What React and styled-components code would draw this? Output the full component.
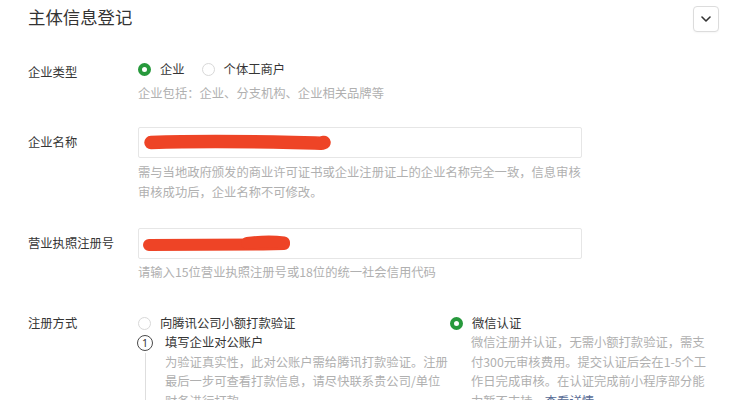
import React from "react";
import styled, { createGlobalStyle } from "styled-components";

const GlobalStyle = createGlobalStyle`
  html, body {
    margin: 0;
    padding: 0;
    background: #fff;
  }
  body {
    font-family: "Noto Sans CJK SC", "Noto Sans", sans-serif;
    color: #353535;
  }
`;

const Page = styled.div`
  width: 729px;
  height: 400px;
  overflow: hidden;
  box-sizing: border-box;
  padding: 0 10px 0 28px;
`;

const Header = styled.div`
  display: flex;
  justify-content: space-between;
  align-items: flex-start;
  padding-top: 5px;
`;

const Title = styled.h1`
  margin: 0;
  font-size: 17.4px;
  line-height: 24px;
  font-weight: 400;
  color: #333;
`;

const ToggleButton = styled.button`
  margin-top: 1px;
  width: 26px;
  height: 26px;
  padding: 0;
  display: flex;
  align-items: center;
  justify-content: center;
  background: #fff;
  border: 1px solid #dcdcdc;
  border-radius: 4px;
  box-shadow: 0 1px 2px rgba(0, 0, 0, 0.04);
`;

const Row = styled.div`
  display: grid;
  grid-template-columns: 110px 1fr;
  margin-top: ${(p) => p.$gap}px;
  font-size: 12.3px;
`;

const Label = styled.div`
  color: #353535;
  line-height: ${(p) => p.$lh || 20}px;
  padding-top: ${(p) => p.$pt || 0}px;
`;

const Field = styled.div`
  display: flex;
  flex-direction: column;
`;

const RadioGroup = styled.div`
  display: flex;
  align-items: center;
  gap: 17px;
  line-height: ${(p) => p.$lh || 20}px;
`;

const Option = styled.label`
  display: flex;
  align-items: center;
  gap: 9px;
  color: #353535;
`;

const Radio = styled.span`
  box-sizing: border-box;
  width: 13px;
  height: 13px;
  border-radius: 50%;
  flex: none;
  background: #fff;
  border: ${(p) => (p.$checked ? "4px solid #27993c" : "1px solid #d8d8d8")};
`;

const Hint = styled.div`
  color: #b0b0b0;
  line-height: 20px;
  margin-top: ${(p) => p.$mt || 0}px;
  width: ${(p) => p.$w || 444}px;
`;

const InputBox = styled.div`
  box-sizing: border-box;
  width: 444px;
  height: 31px;
  border: 1px solid #e6e6e6;
  border-radius: 2px;
  padding-left: 4px;
  display: flex;
  align-items: center;
`;

const Methods = styled.div`
  display: flex;
  line-height: 19.5px;
`;

const MethodColumn = styled.div`
  width: ${(p) => p.$w}px;
  flex: none;
  display: flex;
  flex-direction: column;
`;

const Step = styled.div`
  display: grid;
  grid-template-columns: 27px 1fr;
`;

const StepRail = styled.div`
  display: flex;
  flex-direction: column;
  align-items: center;
  width: 16px;
  margin-left: -1px;
`;

const StepNumber = styled.span`
  box-sizing: border-box;
  width: 16px;
  height: 16px;
  margin-top: 1.5px;
  border: 1px solid #4a4a4a;
  border-radius: 50%;
  font-size: 10.5px;
  line-height: 14px;
  text-align: center;
  color: #333;
  font-family: "Noto Sans", sans-serif;
`;

const StepLine = styled.span`
  flex: 1;
  width: 1px;
  margin-top: 2px;
  background: #dedede;
`;

const StepTitle = styled.div`
  color: #353535;
`;

const Desc = styled.div`
  color: #b0b0b0;
  width: ${(p) => p.$w}px;
  margin-left: ${(p) => p.$ml || 0}px;
`;

const Link = styled.a`
  color: #576b95;
  text-decoration: none;
`;

const Chevron = () => (
  <svg width="10" height="6" viewBox="0 0 10 6">
    <path d="M1 1 L5 5 L9 1" fill="none" stroke="#333" strokeWidth="1.6" strokeLinecap="round" strokeLinejoin="round" />
  </svg>
);

const Scribble = ({ width, children }) => (
  <svg width={width} height="22" viewBox={`0 0 ${width} 22`}>
    <g fill="none" stroke="#ee4426" strokeLinecap="round" strokeLinejoin="round">
      {children}
    </g>
  </svg>
);

export default function App() {
  return (
    <>
      <GlobalStyle />
      <Page>
        <Header>
          <Title>主体信息登记</Title>
          <ToggleButton aria-label="收起">
            <Chevron />
          </ToggleButton>
        </Header>

        <Row $gap={27}>
          <Label $pt={3}>企业类型</Label>
          <Field>
            <RadioGroup>
              <Option>
                <Radio $checked />
                企业
              </Option>
              <Option>
                <Radio />
                个体工商户
              </Option>
            </RadioGroup>
            <Hint $mt={4}>企业包括：企业、分支机构、企业相关品牌等</Hint>
          </Field>
        </Row>

        <Row $gap={24}>
          <Label $lh={31}>企业名称</Label>
          <Field>
            <InputBox>
              <Scribble width={190}>
                <path d="M8 10.5 C 50 9, 110 9.5, 150 10.5 S 175 11.5, 181 10.5" strokeWidth="13.5" />
              </Scribble>
            </InputBox>
            <Hint $mt={3.5}>
              需与当地政府颁发的商业许可证书或企业注册证上的企业名称完全一致，信息审核审核成功后，企业名称不可修改。
            </Hint>
          </Field>
        </Row>

        <Row $gap={26.5}>
          <Label $lh={31}>营业执照注册号</Label>
          <Field>
            <InputBox>
              <Scribble width={152}>
                <path d="M6 12 C 40 11.5, 80 11.5, 120 11.5 L 141 11" strokeWidth="12" />
                <path d="M104 10 Q 125 7.5, 141 9.5" strokeWidth="12" />
              </Scribble>
            </InputBox>
            <Hint $mt={3}>请输入15位营业执照注册号或18位的统一社会信用代码</Hint>
          </Field>
        </Row>

        <Row $gap={31.5}>
          <Label $lh={19.5}>注册方式</Label>
          <Methods>
            <MethodColumn $w={312}>
              <RadioGroup $lh={19.5}>
                <Option>
                  <Radio />
                  向腾讯公司小额打款验证
                </Option>
              </RadioGroup>
              <Step>
                <StepRail>
                  <StepNumber>1</StepNumber>
                  <StepLine />
                </StepRail>
                <div>
                  <StepTitle>填写企业对公账户</StepTitle>
                  <Desc $w={285}>
                    为验证真实性，此对公账户需给腾讯打款验证。注册最后一步可查看打款信息，请尽快联系贵公司/单位财务进行打款。
                  </Desc>
                </div>
              </Step>
            </MethodColumn>
            <MethodColumn $w={270}>
              <RadioGroup $lh={19.5}>
                <Option>
                  <Radio $checked />
                  微信认证
                </Option>
              </RadioGroup>
              <Desc $w={238} $ml={21}>
                微信注册并认证，无需小额打款验证，需支付300元审核费用。提交认证后会在1-5个工作日完成审核。在认证完成前小程序部分能力暂不支持，
                <Link href="#">查看详情</Link>
              </Desc>
            </MethodColumn>
          </Methods>
        </Row>
      </Page>
    </>
  );
}
